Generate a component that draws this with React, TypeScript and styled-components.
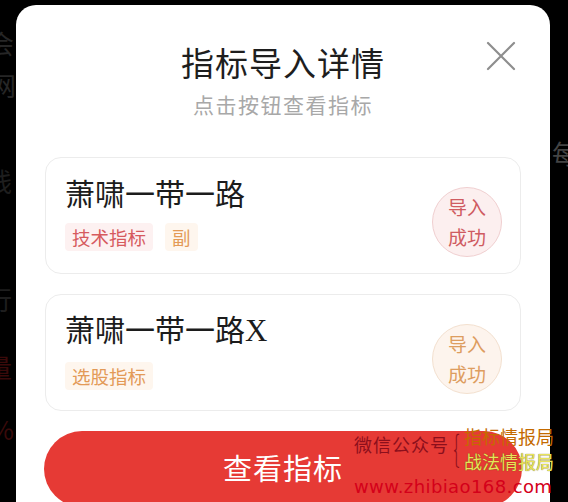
import React from "react";
import styled, { createGlobalStyle } from "styled-components";

const GlobalStyle = createGlobalStyle`
  html, body {
    margin: 0;
    padding: 0;
    background: #000;
  }
  body {
    font-family: "Noto Sans CJK SC", "Noto Sans", sans-serif;
  }
`;

const Screen = styled.div`
  position: relative;
  width: 568px;
  height: 502px;
  overflow: hidden;
  background: #000;
`;

const BackdropText = styled.div<{ top: number; left: number; color: string }>`
  position: absolute;
  top: ${(p) => p.top}px;
  left: ${(p) => p.left}px;
  font-size: 26px;
  line-height: 30px;
  color: ${(p) => p.color};
  white-space: nowrap;
`;

const Modal = styled.div`
  position: relative;
  margin: 5px 0 0 16px;
  width: 534px;
  height: 540px;
  background: #fff;
  border-radius: 20px;
  box-sizing: border-box;
  padding: 35px 28px 0 28px;
  display: flex;
  flex-direction: column;
`;

const Header = styled.div`
  display: flex;
  flex-direction: column;
  align-items: center;
  gap: 6px;
  margin-bottom: 39px;
`;

const Title = styled.div`
  font-size: 33px;
  line-height: 44px;
  color: #1e1e1e;
  letter-spacing: 1px;
`;

const Subtitle = styled.div`
  font-size: 21px;
  line-height: 28px;
  color: #a8a8a8;
  letter-spacing: 1.5px;
`;

const CloseButton = styled.button`
  position: absolute;
  top: 35px;
  right: 33px;
  width: 32px;
  height: 32px;
  padding: 0;
  border: none;
  background: none;
`;

const CardList = styled.div`
  display: flex;
  flex-direction: column;
  gap: 20px;
  padding: 0 1px;
`;

const Card = styled.div`
  display: flex;
  align-items: center;
  justify-content: space-between;
  height: 117px;
  box-sizing: border-box;
  padding: 0 18px 0 19px;
  border: 1px solid #ececec;
  border-radius: 16px;
`;

const CardBody = styled.div`
  display: flex;
  flex-direction: column;
  gap: 12px;
  margin-top: -7px;
`;

const CardTitle = styled.div`
  font-size: 30px;
  line-height: 38px;
  color: #1c1c1c;
  font-family: "Noto Sans CJK SC", "Liberation Serif", serif;
`;

const Latin = styled.span`
  font-family: "Liberation Serif", serif;
  font-size: 31px;
`;

const Tags = styled.div`
  display: flex;
  gap: 12px;
`;

const Tag = styled.span<{ tone: "red" | "orange" }>`
  display: inline-block;
  padding: 0 7px;
  height: 28px;
  line-height: 28px;
  font-size: 18.5px;
  border-radius: 4px;
  color: ${(p) => (p.tone === "red" ? "#d65a5e" : "#e39a57")};
  background: ${(p) => (p.tone === "red" ? "#fdf1f1" : "#fef6ee")};
`;

const Badge = styled.div<{ tone: "red" | "orange" }>`
  width: 68px;
  height: 68px;
  margin-top: 13px;
  border-radius: 50%;
  display: flex;
  flex-direction: column;
  align-items: center;
  justify-content: center;
  font-size: 19px;
  line-height: 30px;
  color: ${(p) => (p.tone === "red" ? "#cf5b61" : "#dd9d60")};
  background: ${(p) => (p.tone === "red" ? "#fcefef" : "#fdf4ed")};
  border: 1px solid ${(p) => (p.tone === "red" ? "#f0cfd0" : "#f3e0cf")};
`;

const ActionButton = styled.button`
  margin-top: 20px;
  height: 76px;
  border: none;
  border-radius: 38px;
  background: #e63a35;
  color: #fff;
  font-family: "Noto Sans CJK SC", sans-serif;
  font-size: 29px;
  letter-spacing: 1px;
  padding-bottom: 6px;
`;

const Watermark = styled.div`
  position: absolute;
  left: 354px;
  top: 424px;
  font-family: "Noto Sans CJK SC", sans-serif;
  display: grid;
  grid-template-columns: 96px 14px auto;
  align-items: center;
`;

const WmLabel = styled.div`
  font-size: 18px;
  line-height: 24px;
  color: #8c0f1c;
  letter-spacing: 1px;
  margin-top: -10px;
`;

const Brace = styled.div`
  font-size: 36px;
  line-height: 36px;
  color: #8c0f1c;
  font-weight: 200;
  transform: scaleX(0.55);
  margin-top: -6px;
`;

const WmNames = styled.div`
  display: flex;
  flex-direction: column;
  font-size: 18px;
  line-height: 25px;
`;

const WmName = styled.div<{ color: string }>`
  color: ${(p) => p.color};
  text-shadow: ${(p) =>
    p.color === "#e8e35a" ? "0 0 1px #5a4a00" : "none"};
`;

const WmUrl = styled.div`
  grid-column: 1 / 4;
  font-family: "DejaVu Sans", sans-serif;
  font-size: 18px;
  line-height: 22px;
  color: #d4001a;
  letter-spacing: 0.4px;
  margin-top: 2px;
`;

const cards = [
  { name: "萧啸一带一路", suffix: "", tone: "red" as const, tags: [{ text: "技术指标", tone: "red" as const }, { text: "副", tone: "orange" as const }] },
  { name: "萧啸一带一路", suffix: "X", tone: "orange" as const, tags: [{ text: "选股指标", tone: "orange" as const }] },
];

export default function App() {
  return (
    <Screen>
      <GlobalStyle />
      <BackdropText top={28} left={-12} color="#262626">会</BackdropText>
      <BackdropText top={70} left={-10} color="#262626">网</BackdropText>
      <BackdropText top={166} left={-14} color="#1e1e1e">线</BackdropText>
      <BackdropText top={284} left={-14} color="#1e1e1e">行</BackdropText>
      <BackdropText top={352} left={-14} color="#3a0a0a">量</BackdropText>
      <BackdropText top={414} left={-10} color="#3a0a0a">%</BackdropText>
      <BackdropText top={138} left={552} color="#444">每</BackdropText>
      <Modal>
        <Header>
          <Title>指标导入详情</Title>
          <Subtitle>点击按钮查看指标</Subtitle>
        </Header>
        <CloseButton aria-label="关闭">
          <svg width="32" height="32" viewBox="0 0 32 32">
            <path d="M3 3 L29 29 M29 3 L3 29" stroke="#8e8e8e" strokeWidth="2.2" strokeLinecap="round" />
          </svg>
        </CloseButton>
        <CardList>
          {cards.map((c, i) => (
            <Card key={i}>
              <CardBody>
                <CardTitle>
                  {c.name}
                  {c.suffix && <Latin>{c.suffix}</Latin>}
                </CardTitle>
                <Tags>
                  {c.tags.map((t) => (
                    <Tag key={t.text} tone={t.tone}>
                      {t.text}
                    </Tag>
                  ))}
                </Tags>
              </CardBody>
              <Badge tone={c.tone}>
                <span>导入</span>
                <span>成功</span>
              </Badge>
            </Card>
          ))}
        </CardList>
        <ActionButton>查看指标</ActionButton>
      </Modal>
      <Watermark>
        <WmLabel>微信公众号</WmLabel>
        <Brace>{"{"}</Brace>
        <WmNames>
          <WmName color="#c46a00">指标情报局</WmName>
          <WmName color="#e8e35a">战法情报局</WmName>
        </WmNames>
        <WmUrl>www.zhibiao168.com</WmUrl>
      </Watermark>
    </Screen>
  );
}
